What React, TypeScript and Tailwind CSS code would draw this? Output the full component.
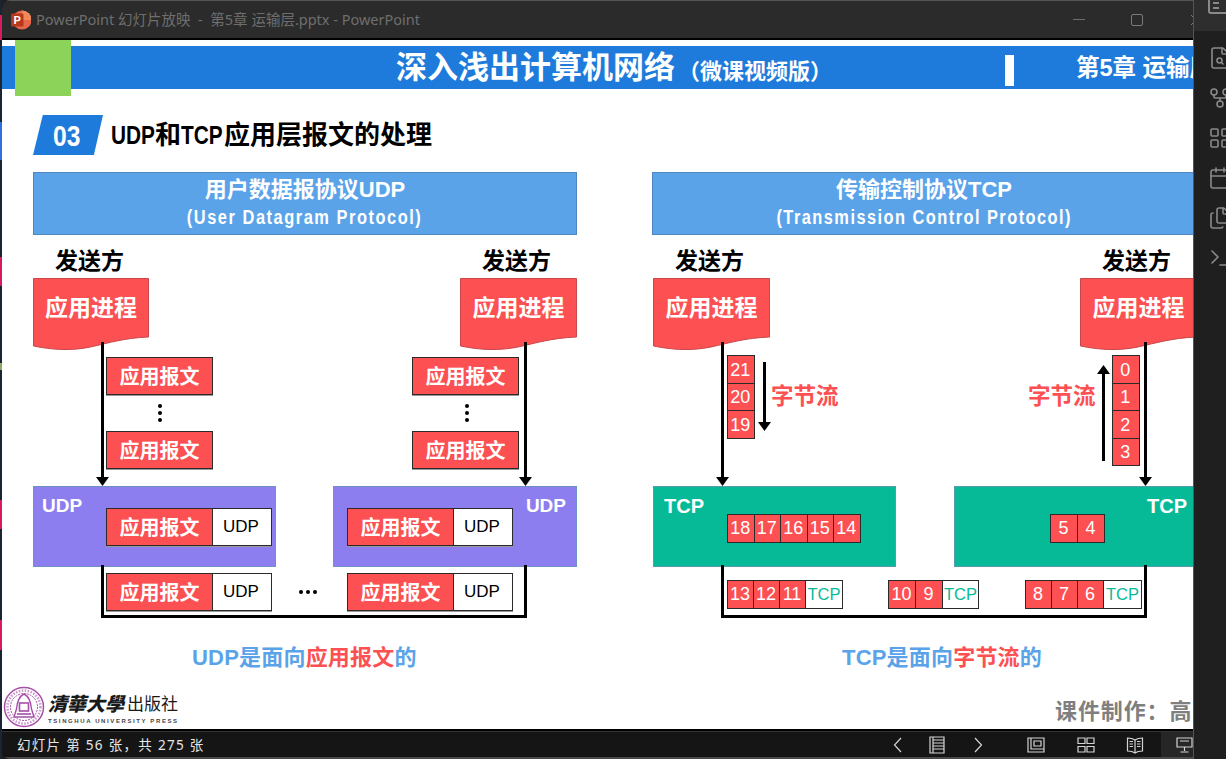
import React from "react";
import { Calendar, Files, FileSearch, GitFork, LayoutGrid, Terminal } from "lucide-react";

const cjk = "font-['Liberation_Sans','Noto_Sans_CJK_SC',sans-serif]";

/** ================= Small slide parts ================= */
const Doc: React.FC<{ className: string }> = ({ className }) => (
  <div className={`absolute top-[43px] h-[72px] ${className}`}>
    <svg className="absolute inset-0 h-full w-full" viewBox="0 0 117 72" preserveAspectRatio="none">
      <path
        d="M.5.5H116.5V59C92 60 76 65 58 69C38 73 20 72 .5 68Z"
        fill="#fd5052"
        stroke="#c9474b"
        strokeWidth="1"
      />
    </svg>
    <div className="relative pt-[15px] text-center text-[23px] leading-[30px] font-bold text-white">应用进程</div>
  </div>
);

const Sender: React.FC<{ className: string }> = ({ className }) => (
  <div className={`absolute top-[11px] text-[23px] leading-[30px] font-bold text-black ${className}`}>发送方</div>
);

const Msg: React.FC<{ className?: string }> = ({ className = "" }) => (
  <div
    className={`flex h-[38px] w-[107px] shrink-0 items-center justify-center border border-[#2a2a2a] bg-[#fd5052] pt-px text-[20px] font-bold text-white shadow-[0_1px_0_#999] ${className}`}
  >
    应用报文
  </div>
);

const MsgUdp: React.FC<{ className: string }> = ({ className }) => (
  <div className={`absolute flex ${className}`}>
    <Msg />
    <div className="-ml-px flex h-[38px] w-[60px] items-center justify-center border border-[#2a2a2a] bg-white pr-[2px] text-[17px] text-black shadow-[0_1px_0_#999]">
      UDP
    </div>
  </div>
);

const Row: React.FC<{ nums: number[]; className: string; cell: string; tag?: string }> = ({ nums, className, cell, tag }) => (
  <div className={`absolute flex ${className}`}>
    {nums.map((n) => (
      <div
        key={n}
        className={`-ml-px flex h-[28.5px] shrink-0 items-center justify-center border border-[#2a2a2a] bg-[#fd5052] pr-px text-[18px] text-white first:ml-0 ${cell}`}
      >
        {n}
      </div>
    ))}
    {tag && (
      <div className={`-ml-px flex h-[28.5px] items-center justify-center border border-[#2a2a2a] bg-white text-[16.5px] text-[#06ba98] ${tag}`}>
        TCP
      </div>
    )}
  </div>
);

const Col: React.FC<{ nums: number[]; className: string }> = ({ nums, className }) => (
  <div className={`absolute flex w-[27.5px] flex-col ${className}`}>
    {nums.map((n) => (
      <div
        key={n}
        className="-mt-px flex h-[28.5px] items-center justify-center border border-[#2a2a2a] bg-[#fd5052] pt-[2px] pr-px text-[18px] text-white first:mt-0"
      >
        {n}
      </div>
    ))}
  </div>
);

const Arrow: React.FC<{ className: string; up?: boolean }> = ({ className, up }) => (
  <div className={`absolute flex w-[13px] items-center ${up ? "flex-col-reverse" : "flex-col"} ${className}`}>
    <div className="w-[3px] flex-1 bg-black" />
    <svg width="13" height="9" viewBox="0 0 13 9" className="shrink-0">
      <path d={up ? "M6.5 0L13 9H0Z" : "M0 0H13L6.5 9Z"} fill="#000" />
    </svg>
  </div>
);

const Dots: React.FC<{ className: string }> = ({ className }) => (
  <div className={`absolute flex w-[4px] flex-col gap-[3px] ${className}`}>
    <div className="h-[4px] rounded-full bg-black" />
    <div className="h-[4px] rounded-full bg-black" />
    <div className="h-[4px] rounded-full bg-black" />
  </div>
);

const HDots: React.FC<{ className: string }> = ({ className }) => (
  <div className={`absolute flex gap-[3px] ${className}`}>
    <div className="h-[4px] w-[4px] rounded-full bg-black" />
    <div className="h-[4px] w-[4px] rounded-full bg-black" />
    <div className="h-[4px] w-[4px] rounded-full bg-black" />
  </div>
);

const Bracket: React.FC<{ className: string }> = ({ className }) => (
  <div className={`absolute top-[330px] h-[53px] w-[426px] border-x-[3px] border-b-[3px] border-black ${className}`} />
);

// The slide's latin subtitle is a condensed face, so squeeze Arial's metrics
const ProtoHead: React.FC<{ zh: string; en: string; spacing: string }> = ({ zh, en, spacing }) => (
  <div className="flex h-[63px] flex-col items-center border border-[#4f86c0] bg-[#5ba3e9] pt-[1px] font-bold text-white">
    <div className="text-[22px] leading-[31px]">{zh}</div>
    <div className={`scale-x-[0.82] text-[20px] leading-[25px] whitespace-nowrap ${spacing}`}>{en}</div>
  </div>
);

const UdpPanel = () => (
  <div className="w-[544px]">
    <ProtoHead zh="用户数据报协议UDP" en="(User Datagram Protocol)" spacing="tracking-[1.87px]" />
    <div className="relative h-[446px]">
      <Sender className="left-[22px]" />
      <Sender className="left-[449px]" />
      <Doc className="left-0 w-[116px]" />
      <Doc className="left-[427px] w-[117px]" />
      <Arrow className="top-[107px] left-[63px] h-[144px]" />
      <Arrow className="top-[107px] left-[486px] h-[144px]" />
      <Msg className="absolute top-[122px] left-[73px]" />
      <Dots className="top-[169px] left-[125px]" />
      <Msg className="absolute top-[196px] left-[73px]" />
      <Msg className="absolute top-[122px] left-[379px]" />
      <Dots className="top-[169px] left-[432px]" />
      <Msg className="absolute top-[196px] left-[379px]" />

      <div className="absolute top-[251px] left-0 h-[81px] w-[243px] border border-[#6f90c4] bg-[#8c7eef] pt-[7px] pl-[8px] text-[19px] leading-[24px] font-bold text-white">
        UDP
      </div>
      <div className="absolute top-[251px] left-[300px] h-[81px] w-[244px] border border-[#6f90c4] bg-[#8c7eef] pt-[7px] pr-[10px] text-right text-[19px] leading-[24px] font-bold text-white">
        UDP
      </div>
      <MsgUdp className="top-[273px] left-[73px]" />
      <MsgUdp className="top-[273px] left-[314px]" />

      <Bracket className="left-[68px]" />
      <MsgUdp className="top-[338px] left-[73px]" />
      <MsgUdp className="top-[338px] left-[314px]" />
      <HDots className="top-[355px] left-[266px]" />

      <div className="absolute top-[408px] left-[159px] text-[22px] leading-[30px] font-bold tracking-[0.2px] whitespace-nowrap text-[#5ba3e9]">
        UDP是面向<span className="text-[#fd5052]">应用报文</span>的
      </div>
    </div>
  </div>
);

const TcpPanel = () => (
  <div className="w-[544px]">
    <ProtoHead zh="传输控制协议TCP" en="(Transmission Control Protocol)" spacing="tracking-[1.77px]" />
    <div className="relative h-[446px]">
      <Sender className="left-[23px]" />
      <Sender className="left-[450px]" />
      <Doc className="left-px w-[117px]" />
      <Doc className="left-[428px] w-[117px]" />
      <Arrow className="top-[107px] left-[64px] h-[144px]" />
      <Arrow className="top-[107px] left-[487px] h-[144px]" />

      <Col nums={[21, 20, 19]} className="top-[120px] left-[75px]" />
      <Arrow className="top-[127px] left-[106px] h-[69px]" />
      <div className="absolute top-[147px] left-[119px] text-[22.5px] leading-[30px] font-bold whitespace-nowrap text-[#fd5052]">字节流</div>

      <Col nums={[0, 1, 2, 3]} className="top-[120px] left-[460px]" />
      <Arrow up className="top-[130px] left-[445px] h-[96px]" />
      <div className="absolute top-[147px] left-[376px] text-[22.5px] leading-[30px] font-bold whitespace-nowrap text-[#fd5052]">字节流</div>

      <div className="absolute top-[251px] left-px h-[81px] w-[243px] border border-[#5a9ab0] bg-[#06ba98] pt-[7px] pl-[10px] text-[20px] leading-[24px] font-bold text-white">
        TCP
      </div>
      <div className="absolute top-[251px] left-[302px] h-[81px] w-[244px] border border-[#5a9ab0] bg-[#06ba98] pt-[7px] pr-[10px] text-right text-[20px] leading-[24px] font-bold text-white">
        TCP
      </div>
      <Row nums={[18, 17, 16, 15, 14]} cell="w-[27.5px]" className="top-[279px] left-[75px]" />
      <Row nums={[5, 4]} cell="w-[28px]" className="top-[279px] left-[398px]" />

      <Bracket className="left-[69px]" />
      <Row nums={[13, 12, 11]} cell="w-[27px]" tag="w-[38px]" className="top-[345px] left-[75px]" />
      <Row nums={[10, 9]} cell="w-[28px]" tag="w-[37px]" className="top-[345px] left-[236px]" />
      <Row nums={[8, 7, 6]} cell="w-[27px]" tag="w-[39px]" className="top-[345px] left-[373px]" />

      <div className="absolute top-[408px] left-[190px] text-[22px] leading-[30px] font-bold tracking-[0.2px] whitespace-nowrap text-[#5ba3e9]">
        TCP是面向<span className="text-[#fd5052]">字节流</span>的
      </div>
    </div>
  </div>
);

/** ================= Logo + chrome icons ================= */
const Seal = () => (
  <svg width="42" height="42" viewBox="0 0 42 42" fill="none" stroke="#a650a8" className="shrink-0">
    <circle cx="21" cy="21" r="19.5" strokeWidth="1.5" />
    <circle cx="21" cy="21" r="13.5" strokeWidth="1" strokeDasharray="2 1" />
    <circle cx="21" cy="21" r="16.5" strokeWidth="2.5" strokeDasharray="1.5 1.5" strokeOpacity=".6" />
    <path d="M21 8C15 11 14 17 13.5 23L11 31H31L28.5 23C28 17 27 11 21 8Z" fill="#fff" strokeWidth="1.4" />
    <rect x="16.5" y="17" width="9" height="8" strokeWidth="1.6" />
    <path d="M14 28H28" strokeWidth="1.6" />
  </svg>
);

const PptIcon = () => (
  <svg width="20" height="20" viewBox="0 0 20 20" className="shrink-0">
    <circle cx="11" cy="10" r="9.5" fill="#e8674a" />
    <path d="M11 .5A9.5 9.5 0 0 1 20.5 10H11Z" fill="#f08a5c" />
    <rect x="0" y="3.5" width="12.5" height="13" rx="1.2" fill="#b7391c" />
    <text x="6.2" y="14" textAnchor="middle" fontSize="11" fontWeight="700" fill="#fff" fontFamily="Liberation Sans">
      P
    </text>
  </svg>
);

const BarIcon: React.FC<{ children: React.ReactNode; w?: number }> = ({ children, w = 18 }) => (
  <svg width={w} height="18" viewBox={`0 0 ${w} 18`} fill="none" stroke="#d4d4d4" strokeWidth="1.2">
    {children}
  </svg>
);

const stripes = [
  "h-[15px] bg-[#1b2433]",
  "h-[25px] bg-[#d81b60]",
  "h-[82px] bg-[#1b2433]",
  "h-[38px] bg-[#2f6fe0]",
  "h-[97px] bg-[#1b2433]",
  "h-[29px] bg-[#d81b60]",
  "h-[77px] bg-[#1b2433]",
  "h-[7px] bg-[#8aa86a]",
  "h-[130px] bg-[#1b2433]",
  "h-[29px] bg-[#d81b60]",
  "h-[91px] bg-[#1b2433]",
  "h-[30px] bg-[#d81b60]",
  "flex-1 bg-[#1b2433]",
];

/** ================= Main ================= */
export default function App() {
  return (
    <div className={`flex h-[759px] w-[1226px] overflow-hidden bg-[#1f1f1f] ${cjk}`}>
      {/* desktop peeking out on the left */}
      <div className="flex w-[2px] shrink-0 flex-col">
        {stripes.map((s, i) => (
          <div key={i} className={s} />
        ))}
      </div>

      {/* slideshow window */}
      <div className="flex w-[1191px] shrink-0 flex-col overflow-hidden rounded-tl-[8px] rounded-bl-[8px] bg-black">
        <div className="flex h-[38px] shrink-0 items-center border-t border-[#555] bg-[#2b2b2b] pl-[9px]">
          <PptIcon />
          <span className="ml-[5px] font-['Noto_Sans','Noto_Sans_CJK_SC',sans-serif] text-[14.5px] whitespace-nowrap text-[#6e6e6e]">
            PowerPoint 幻灯片放映 &nbsp;-&nbsp; 第5章 运输层.pptx - PowerPoint
          </span>
          <div className="-mr-[9px] ml-auto flex shrink-0 items-center">
            <div className="h-px w-[12px] bg-[#6e6e6e]" />
            <div className="ml-[46px] h-[12px] w-[12px] rounded-[2px] border border-[#7a7a7a]" />
            <svg width="12" height="12" viewBox="0 0 12 12" className="ml-[47px] shrink-0" stroke="#7a7a7a" fill="none">
              <path d="M1 1L11 11M11 1L1 11" />
            </svg>
          </div>
        </div>

        <div className="relative mt-[2px] flex h-[689px] shrink-0 flex-col overflow-hidden bg-white">
          <div className="absolute top-0 left-[13px] z-10 h-[56px] w-[56px] bg-[#8cd35a]" />

          {/* top band */}
          <div className="mt-[6px] flex h-[43px] shrink-0 items-center bg-[#1e7bdb] font-bold whitespace-nowrap text-white">
            <span className="ml-[394px] text-[31px] leading-[40px]">深入浅出计算机网络</span>
            <span className="mt-[9px] ml-[3px] w-[152px] text-[22px] leading-[34px]">（微课视频版）</span>
            <div className="mt-[5px] ml-[175px] h-[31px] w-[9px] shrink-0 bg-white" />
            <span className="ml-[62px] text-[23.5px] leading-[40px]">第5章 运输层</span>
          </div>

          {/* section title */}
          <div className="mt-[26px] flex h-[40px] shrink-0 items-center pl-[31px]">
            <div className="flex h-[40px] w-[70px] items-center justify-center bg-[#1e7bdb] pr-[3px] [clip-path:polygon(14%_0,100%_0,87%_100%,0_100%)]">
              <span className="inline-block scale-x-[0.82] text-[30px] font-bold text-white">03</span>
            </div>
            <div className="ml-[8px] flex text-[26px] font-bold whitespace-nowrap text-black">
              <span className="w-[44px] origin-left scale-x-[0.8]">UDP</span>
              <span className="w-[26px]">和</span>
              <span className="w-[43px] origin-left scale-x-[0.8]">TCP</span>
              <span>应用层报文的处理</span>
            </div>
          </div>

          {/* two protocols side by side */}
          <div className="mt-[17px] flex shrink-0 gap-[75px] pl-[31px]">
            <div className="shrink-0">
              <UdpPanel />
            </div>
            <div className="shrink-0">
              <TcpPanel />
            </div>
          </div>

          {/* footer */}
          <div className="flex shrink-0 items-start pt-[5px]">
            <div className="flex w-[1053px] shrink-0 items-start pl-[1px]">
              <Seal />
              <div className="mt-[3px] ml-[3px] flex flex-col">
                <div className="flex items-end whitespace-nowrap text-[#1a1a1a]">
                  <span className="w-[78px] font-['Noto_Sans_CJK_TC',sans-serif] text-[19px] leading-[28px] font-black italic">清華大學</span>
                  <span className="ml-[1px] font-['Noto_Sans_CJK_TC',sans-serif] text-[17px] leading-[28px]">出版社</span>
                </div>
                <div className="text-[6px] leading-[8px] font-bold tracking-[1.6px] whitespace-nowrap text-[#444]">
                  TSINGHUA UNIVERSITY PRESS
                </div>
              </div>
            </div>
            <span className="mt-[11px] text-[22px] leading-[30px] font-bold tracking-[0.9px] whitespace-nowrap text-[#7f7f7f]">
              课件制作：高
            </span>
          </div>
        </div>

        {/* status bar */}
        <div className="mt-[2px] flex h-[26px] shrink-0 items-center border-t border-[#333] bg-[#151515] font-['Noto_Sans','Noto_Sans_CJK_SC',sans-serif]">
          <span className="mt-px ml-[15px] text-[13.5px] tracking-[1.3px] whitespace-nowrap text-[#e6e6e6]">幻灯片 第 56 张，共 275 张</span>
          <div className="ml-auto flex h-full items-center">
            <BarIcon w={12}>
              <path d="M9 2L2.5 9L9 16" />
            </BarIcon>
            <div className="ml-[25px]">
              <BarIcon w={16}>
                <path d="M1 1H15V17H1ZM4 1V17M4 4H15M4 7H15M4 10H15M4 13H15" />
              </BarIcon>
            </div>
            <div className="ml-[27px]">
              <BarIcon w={12}>
                <path d="M3 2L9.5 9L3 16" />
              </BarIcon>
            </div>
            <div className="ml-[43px]">
              <BarIcon>
                <path d="M1 2H17V16H1ZM4 2V13H17M7 5H14V10H7Z" />
              </BarIcon>
            </div>
            <div className="ml-[32px]">
              <BarIcon>
                <path d="M1 2H8V7.5H1ZM10 2H17V7.5H10ZM1 10.5H8V16H1ZM10 10.5H17V16H10Z" />
              </BarIcon>
            </div>
            <div className="ml-[31px]">
              <BarIcon>
                <path d="M9 4C7 2.5 4 2 1.5 2V15C4 15 7 15.5 9 17C11 15.5 14 15 16.5 15V2C14 2 11 2.5 9 4ZM9 4V17M3.5 5.5H7M3.5 8H7M3.5 10.5H7M11 5.5H14.5M11 8H14.5M11 10.5H14.5" />
              </BarIcon>
            </div>
            <div className="ml-[17px] flex h-full w-[32px] items-center bg-[#262626] pl-[15px]">
              <div className="shrink-0">
                <BarIcon w={17}>
                  <path d="M1 2H16V11H1ZM4 5H13M8.5 11V15M4.5 16H12.5" />
                </BarIcon>
              </div>
            </div>
          </div>
        </div>
        <div className="h-[2px] shrink-0 bg-[#4a4a4a]" />
      </div>

      {/* panel of the window behind */}
      <div className="flex w-[33px] shrink-0 flex-col overflow-hidden border-l border-[#555] bg-[#1f1f1f] text-[#8a8a8a]">
        <div className="h-[31px] shrink-0 overflow-hidden bg-[#2e2e2e] pl-[14px]">
          <div className="-mt-[9px] flex h-[23px] w-[24px] flex-col gap-[3px] rounded-[3px] border-2 border-[#8a8a8a] pt-[9px] pl-[3px]">
            <div className="h-[2px] w-[6px] bg-[#8a8a8a]" />
            <div className="h-[2px] w-[6px] bg-[#8a8a8a]" />
          </div>
        </div>
        <div className="mt-[15px] flex w-[50px] flex-col gap-[16px] pl-[14px]">
          <FileSearch size={24} strokeWidth={1.6} className="shrink-0" />
          <GitFork size={24} strokeWidth={1.6} className="shrink-0" />
          <LayoutGrid size={24} strokeWidth={1.6} className="shrink-0" />
          <Calendar size={24} strokeWidth={1.6} className="shrink-0" />
          <Files size={24} strokeWidth={1.6} className="shrink-0" />
          <Terminal size={24} strokeWidth={1.6} className="shrink-0" />
        </div>
      </div>
    </div>
  );
}
